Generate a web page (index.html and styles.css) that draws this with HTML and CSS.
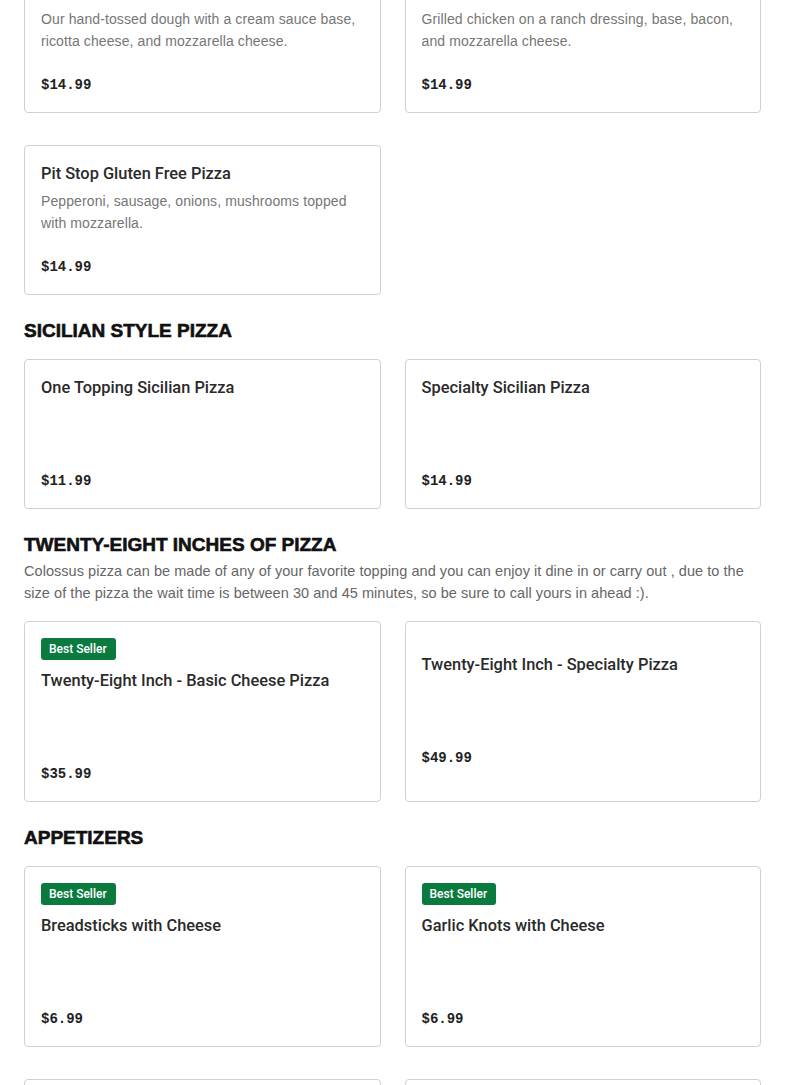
FILE: index.html
```html
<!DOCTYPE html>
<html lang="en">
<head>
<meta charset="utf-8">
<title>Menu</title>
<link rel="stylesheet" href="styles.css">
</head>
<body>
<main class="menu">
  <section class="section section-first">
    <div class="grid">
      <article class="card">
        <div class="card-body">
          <h3 class="item-title">Classic White Pizza</h3>
          <p class="item-desc">Our hand-tossed dough with a cream sauce base, ricotta cheese, and mozzarella cheese.</p>
          <p class="item-price">$14.99</p>
        </div>
      </article>
      <article class="card">
        <div class="card-body">
          <h3 class="item-title">Chicken Bacon Ranch Pizza</h3>
          <p class="item-desc">Grilled chicken on a ranch dressing, base, bacon, and mozzarella cheese.</p>
          <p class="item-price">$14.99</p>
        </div>
      </article>
      <article class="card">
        <div class="card-body">
          <h3 class="item-title">Pit Stop Gluten Free Pizza</h3>
          <p class="item-desc">Pepperoni, sausage, onions, mushrooms topped with mozzarella.</p>
          <p class="item-price">$14.99</p>
        </div>
      </article>
    </div>
  </section>

  <section class="section">
    <h2 class="section-title">SICILIAN STYLE PIZZA</h2>
    <div class="grid">
      <article class="card">
        <div class="card-body">
          <h3 class="item-title">One Topping Sicilian Pizza</h3>
          <p class="item-desc"></p>
          <p class="item-price">$11.99</p>
        </div>
      </article>
      <article class="card">
        <div class="card-body">
          <h3 class="item-title">Specialty Sicilian Pizza</h3>
          <p class="item-desc"></p>
          <p class="item-price">$14.99</p>
        </div>
      </article>
    </div>
  </section>

  <section class="section">
    <h2 class="section-title">TWENTY-EIGHT INCHES OF PIZZA</h2>
    <p class="section-desc">Colossus pizza can be made of any of your favorite topping and you can enjoy it dine in or carry out , due to the size of the pizza the wait time is between 30 and 45 minutes, so be sure to call yours in ahead :).</p>
    <div class="grid">
      <article class="card">
        <div class="card-body">
          <span class="badge">Best Seller</span>
          <h3 class="item-title">Twenty-Eight Inch - Basic Cheese Pizza</h3>
          <p class="item-desc"></p>
          <p class="item-price">$35.99</p>
        </div>
      </article>
      <article class="card">
        <div class="card-body">
          <h3 class="item-title">Twenty-Eight Inch - Specialty Pizza</h3>
          <p class="item-desc"></p>
          <p class="item-price">$49.99</p>
        </div>
      </article>
    </div>
  </section>

  <section class="section">
    <h2 class="section-title">APPETIZERS</h2>
    <div class="grid">
      <article class="card">
        <div class="card-body">
          <span class="badge">Best Seller</span>
          <h3 class="item-title">Breadsticks with Cheese</h3>
          <p class="item-desc"></p>
          <p class="item-price">$6.99</p>
        </div>
      </article>
      <article class="card">
        <div class="card-body">
          <span class="badge">Best Seller</span>
          <h3 class="item-title">Garlic Knots with Cheese</h3>
          <p class="item-desc"></p>
          <p class="item-price">$6.99</p>
        </div>
      </article>
      <article class="card">
        <div class="card-body">
          <h3 class="item-title">Mozzarella Sticks</h3>
          <p class="item-desc"></p>
          <p class="item-price">$7.99</p>
        </div>
      </article>
      <article class="card">
        <div class="card-body">
          <h3 class="item-title">Chicken Wings</h3>
          <p class="item-desc"></p>
          <p class="item-price">$9.99</p>
        </div>
      </article>
    </div>
  </section>
</main>
</body>
</html>
```

FILE: styles.css
```css
* {
  box-sizing: border-box;
}

html, body {
  margin: 0;
  padding: 0;
  background: #ffffff;
}

body {
  font-family: "Liberation Sans", Arial, sans-serif;
  color: #2b2b2b;
  overflow: hidden;
}

.menu {
  margin: -37px 24px 0 24px;
  display: flex;
  flex-direction: column;
}

.section {
  display: flex;
  flex-direction: column;
  padding-top: 24px;
}

.section-first {
  padding-top: 0;
}

.section-title {
  margin: 0 0 16px 0;
  font-family: "Liberation Sans", Arial, sans-serif;
  font-weight: 700;
  font-size: 19px;
  line-height: 24px;
  color: #111111;
  -webkit-text-stroke: 0.6px #111111;
  letter-spacing: 0;
}

.section-title:has(+ .section-desc) {
  margin-bottom: 3px;
}

.section-desc {
  margin: 0 0 17px 0;
  font-family: "Liberation Sans", Arial, sans-serif;
  font-size: 14.5px;
  letter-spacing: 0.05px;
  line-height: 22px;
  color: #666666;
}

.grid {
  display: grid;
  grid-template-columns: 1fr 1fr;
  column-gap: 24px;
  row-gap: 32px;
}

.card {
  border: 1px solid #d0d0d0;
  border-radius: 4px;
  padding: 16px;
  min-height: 150px;
  display: flex;
  flex-direction: column;
  justify-content: center;
  background: #fff;
}

.card-body {
  display: flex;
  flex-direction: column;
  align-items: flex-start;
}

.badge {
  display: inline-block;
  background: #0b7a3f;
  color: #ffffff;
  font-family: "Roboto", "Liberation Sans", sans-serif;
  font-weight: 500;
  font-size: 12px;
  line-height: 22px;
  height: 22px;
  padding: 0 9px 0 8px;
  border-radius: 3px;
  margin-bottom: 10px;
}

.item-title {
  margin: 0;
  font-family: "Roboto", "Liberation Sans", sans-serif;
  font-weight: 500;
  font-size: 16.4px;
  line-height: 22px;
  color: #2a2a2a;
}

.item-desc {
  margin: 5px 0 0 0;
  min-height: 44px;
  font-family: "Liberation Sans", Arial, sans-serif;
  font-size: 14px;
  line-height: 22px;
  color: #767676;
  letter-spacing: 0.1px;
}

.item-price {
  margin: 22px 0 0 0;
  font-family: "Liberation Mono", "DejaVu Sans Mono", monospace;
  font-weight: 700;
  font-size: 14px;
  line-height: 22px;
  color: #222222;
}
```
